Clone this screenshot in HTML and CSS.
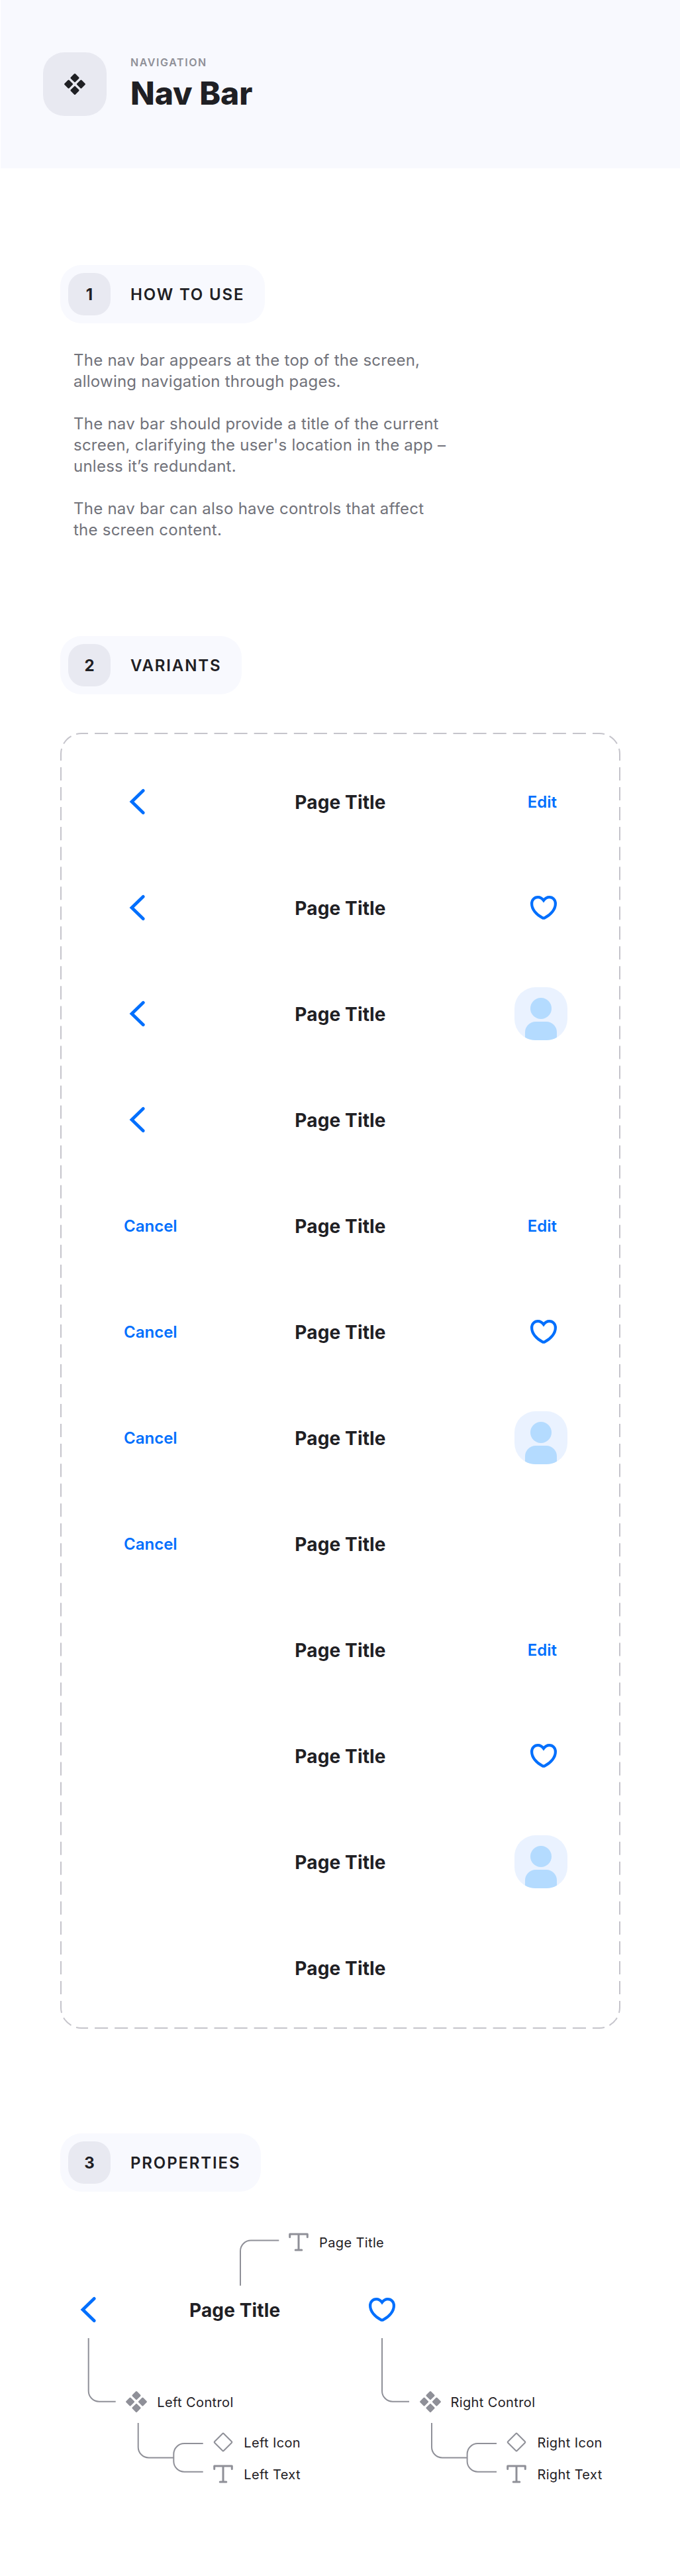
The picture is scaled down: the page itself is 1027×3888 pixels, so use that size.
FILE: index.html
```html
<!DOCTYPE html>
<html lang="en">
<head>
<meta charset="utf-8">
<title>Nav Bar</title>
<link rel="stylesheet" href="styles.css">
</head>
<body>
<svg class="defs" aria-hidden="true">
  <symbol id="component" viewBox="0 0 32 32">
    <g fill="currentColor">
      <rect x="-5" y="-5" width="10" height="10" rx="1.5" transform="translate(16 6.6) rotate(45)"/>
      <rect x="-5" y="-5" width="10" height="10" rx="1.5" transform="translate(16 25.4) rotate(45)"/>
      <rect x="-5" y="-5" width="10" height="10" rx="1.5" transform="translate(6.6 16) rotate(45)"/>
      <rect x="-5" y="-5" width="10" height="10" rx="1.5" transform="translate(25.4 16) rotate(45)"/>
    </g>
  </symbol>
  <symbol id="chevron" viewBox="0 0 48 48">
    <path d="M29.3 7.3 12 24l17.300 16.700" fill="none" stroke="currentColor" stroke-width="4.800" stroke-linecap="round"/>
  </symbol>
  <symbol id="heart" viewBox="0 0 48 48">
    <path d="M24 13C21.800 10 19 8.100 15.400 8.100C10 8.100 6.100 12.300 6.100 18C6.100 26.500 13 34.500 22 39.100A4 4 0 0 0 26 39.100C35 34.500 41.900 26.500 41.900 18C41.900 12.300 38 8.100 32.600 8.100C29 8.100 26.200 10 24 13Z" fill="none" stroke="currentColor" stroke-width="4.200"/>
  </symbol>
  <symbol id="text" viewBox="0 0 32 32">
    <path d="M2.700 8.500V4H29.300V8.500M16 4V28M11.200 28H20.800" fill="none" stroke="currentColor" stroke-width="3" stroke-linecap="round" stroke-linejoin="round"/>
  </symbol>
  <symbol id="diamond" viewBox="0 0 32 32">
    <rect x="-9.700" y="-9.700" width="19.400" height="19.400" rx="1" transform="translate(16 16) rotate(45)" fill="none" stroke="currentColor" stroke-width="2"/>
  </symbol>
  <symbol id="avatar" viewBox="0 0 80 80">
    <rect width="80" height="80" rx="32" fill="#eaf2ff"/>
    <circle cx="40" cy="32" r="16" fill="#b4dbff"/>
    <path d="M16 75.700V68A16 16 0 0 1 32 52H48A16 16 0 0 1 64 68V75.700A32 32 0 0 1 48 80H32A32 32 0 0 1 16 75.700Z" fill="#b4dbff"/>
  </symbol>
</svg>

<header class="hero">
  <div class="hero-tile"><svg class="icon-32"><use href="#component"/></svg></div>
  <div class="hero-text">
    <p class="eyebrow">NAVIGATION</p>
    <h1 class="hero-title">Nav Bar</h1>
  </div>
</header>

<main class="content">
  <section class="how">
    <h2 class="heading"><span class="number">1</span><span class="heading-text">HOW TO USE</span></h2>
    <div class="prose">
      <p>The nav bar appears at the top of the screen,<br>allowing navigation through pages.</p>
      <p>The nav bar should provide a title of the current<br>screen, clarifying the user's location in the app –<br>unless it’s redundant.</p>
      <p>The nav bar can also have controls that affect<br>the screen content.</p>
    </div>
  </section>

  <section class="variants">
    <h2 class="heading"><span class="number">2</span><span class="heading-text">VARIANTS</span></h2>
    <div class="frame">
      <svg class="outline" viewBox="0 0 846 1956">
        <g fill="none" stroke="#c5c4cb" stroke-width="2">
          <path class="dash-x" d="M32 1H814M32 1955H814"/>
          <path class="dash-y" d="M1 32V1924M845 32V1924"/>
          <path class="dash-corner" d="M1 32A31 31 0 0 1 32 1M814 1A31 31 0 0 1 845 32M845 1924A31 31 0 0 1 814 1955M32 1955A31 31 0 0 1 1 1924"/>
        </g>
      </svg>
      <div class="bar"><span class="side"><svg class="icon-48"><use href="#chevron"/></svg></span><b class="title">Page Title</b><span class="side end"><span class="action">Edit</span></span></div>
      <div class="bar"><span class="side"><svg class="icon-48"><use href="#chevron"/></svg></span><b class="title">Page Title</b><span class="side end"><svg class="icon-48 heart"><use href="#heart"/></svg></span></div>
      <div class="bar"><span class="side"><svg class="icon-48"><use href="#chevron"/></svg></span><b class="title">Page Title</b><span class="side end flush"><svg class="avatar"><use href="#avatar"/></svg></span></div>
      <div class="bar"><span class="side"><svg class="icon-48"><use href="#chevron"/></svg></span><b class="title">Page Title</b><span class="side end"></span></div>
      <div class="bar"><span class="side"><span class="action">Cancel</span></span><b class="title">Page Title</b><span class="side end"><span class="action">Edit</span></span></div>
      <div class="bar"><span class="side"><span class="action">Cancel</span></span><b class="title">Page Title</b><span class="side end"><svg class="icon-48 heart"><use href="#heart"/></svg></span></div>
      <div class="bar"><span class="side"><span class="action">Cancel</span></span><b class="title">Page Title</b><span class="side end flush"><svg class="avatar"><use href="#avatar"/></svg></span></div>
      <div class="bar"><span class="side"><span class="action">Cancel</span></span><b class="title">Page Title</b><span class="side end"></span></div>
      <div class="bar"><span class="side"></span><b class="title">Page Title</b><span class="side end"><span class="action">Edit</span></span></div>
      <div class="bar"><span class="side"></span><b class="title">Page Title</b><span class="side end"><svg class="icon-48 heart"><use href="#heart"/></svg></span></div>
      <div class="bar"><span class="side"></span><b class="title">Page Title</b><span class="side end flush"><svg class="avatar"><use href="#avatar"/></svg></span></div>
      <div class="bar"><span class="side"></span><b class="title">Page Title</b><span class="side end"></span></div>
    </div>
  </section>

  <section class="properties">
    <h2 class="heading"><span class="number">3</span><span class="heading-text">PROPERTIES</span></h2>
    <div class="diagram">
      <svg class="wires" viewBox="0 0 848 420">
        <defs>
          <g id="branch">
            <path d="M42.700 189V268.700A16 16 0 0 0 58.700 284.700H83.700"/>
            <path d="M117.700 317V353.500A16 16 0 0 0 133.700 369.500H171.300"/>
            <path d="M215.700 348H187.300A16 16 0 0 0 171.300 364V374.700A16 16 0 0 0 187.300 390.700H215.700"/>
          </g>
        </defs>
        <g fill="none" stroke="#8f9098" stroke-width="2">
          <path d="M272 109.700V57.500A16 16 0 0 1 288 41.500H330.300"/>
          <use href="#branch"/>
          <use href="#branch" x="443.300"/>
        </g>
      </svg>
      <span class="node n-chevron"><svg class="icon-48"><use href="#chevron"/></svg></span>
      <b class="node title n-title">Page Title</b>
      <span class="node n-heart"><svg class="icon-48"><use href="#heart"/></svg></span>
      <span class="node label n-page"><svg class="icon-32"><use href="#text"/></svg>Page Title</span>
      <span class="node label n-left"><svg class="icon-32"><use href="#component"/></svg>Left Control</span>
      <span class="node label n-left-icon"><svg class="icon-32"><use href="#diamond"/></svg>Left Icon</span>
      <span class="node label n-left-text"><svg class="icon-32"><use href="#text"/></svg>Left Text</span>
      <span class="node label n-right"><svg class="icon-32"><use href="#component"/></svg>Right Control</span>
      <span class="node label n-right-icon"><svg class="icon-32"><use href="#diamond"/></svg>Right Icon</span>
      <span class="node label n-right-text"><svg class="icon-32"><use href="#text"/></svg>Right Text</span>
    </div>
  </section>
</main>
</body>
</html>
```
FILE: styles.css
```css
* { box-sizing: border-box; }
body { margin: 0; background: #fff; color: #1f2024; font-family: Inter, sans-serif; height: 3888px; }
h1, h2, p { margin: 0; }
svg { display: block; flex: none; }
.defs { position: absolute; width: 0; height: 0; }
.icon-32 { width: 32px; height: 32px; }
.icon-48 { width: 48px; height: 48px; }

.hero { display: flex; align-items: center; gap: 36px; height: 254px; margin-left: 1px; padding-left: 64px; background: #f8f9fe; }
.hero-tile { display: flex; align-items: center; justify-content: center; width: 96px; height: 96px; border-radius: 32px; background: #e8e9f1; }
.eyebrow { font-size: 16px; line-height: 20px; font-weight: 600; letter-spacing: 1.6px; color: #8f9098; }
.hero-title { font-size: 48px; line-height: 58px; font-weight: 800; margin-top: 8px; }

.content { padding: 146px 90px 0 91px; }
.heading { display: flex; align-items: center; gap: 30px; width: max-content; height: 88px; padding: 12px 31px 12px 12px; border-radius: 32px; background: #f8f9fe; font-size: 24px; line-height: 29px; font-weight: 600; }
.number { width: 64px; height: 64px; padding-top: 18px; border-radius: 24px; background: #e8e9f1; text-align: center; font-weight: 700; }
.heading-text { padding-top: 1px; letter-spacing: 1.85px; }

.prose { display: flex; flex-direction: column; gap: 32px; padding: 40px 0 0 20px; font-size: 24px; line-height: 32px; letter-spacing: 0.24px; color: #71727a; }
.variants { margin-top: 144px; }
.frame { position: relative; display: flex; flex-direction: column; gap: 80px; width: 846px; height: 1956px; margin-top: 58px; padding: 64px 80px 52px; }
.outline { position: absolute; inset: 0; width: 846px; height: 1956px; }
.dash-x { stroke-dasharray: 20.050 10.027; stroke-dashoffset: 10.025; }
.dash-y { stroke-dasharray: 20.020 10.012; stroke-dashoffset: 10.010; }
.dash-corner { stroke-dasharray: 16.230 8.117; stroke-dashoffset: 8.115; }
.bar { display: grid; grid-template-columns: 1fr auto 1fr; align-items: center; height: 80px; }
.side { display: flex; align-items: center; padding: 0 16px; color: #006ffd; }
.action { padding-top: 1px; font-size: 24px; line-height: 29px; font-weight: 600; }
.end { justify-content: flex-end; }
.flush { padding: 0; }
.heart { margin-right: -4px; }
.avatar { width: 80px; height: 80px; }
.title { padding-top: 2px; font-size: 28px; line-height: 34px; font-weight: 700; letter-spacing: 0.14px; }

.properties { margin-top: 158px; }
.diagram { position: relative; width: 846px; height: 420px; margin-top: 32px; }
.wires { position: absolute; inset: 0; width: 848px; height: 420px; }
.node { position: absolute; color: #006ffd; white-space: nowrap; }
.node.title { color: #1f2024; }
.label { display: flex; align-items: flex-start; gap: 15px; font-size: 20px; line-height: 34px; letter-spacing: 0.38px; }
.node.label { color: #1f2024; }
.label svg { color: #8f9098; }
.n-chevron { left: 22px; top: 122px; }
.n-title { left: 195px; top: 128px; }
.n-heart { left: 462px; top: 122px; }
.n-page { left: 344px; top: 28px; }
.n-left { left: 99.300px; top: 269.300px; }
.n-left-icon { left: 230.200px; top: 330px; }
.n-left-text { left: 230.200px; top: 378px; }
.n-right { left: 542.500px; top: 269.300px; }
.n-right-icon { left: 673.400px; top: 330px; }
.n-right-text { left: 673.400px; top: 378px; }
```
